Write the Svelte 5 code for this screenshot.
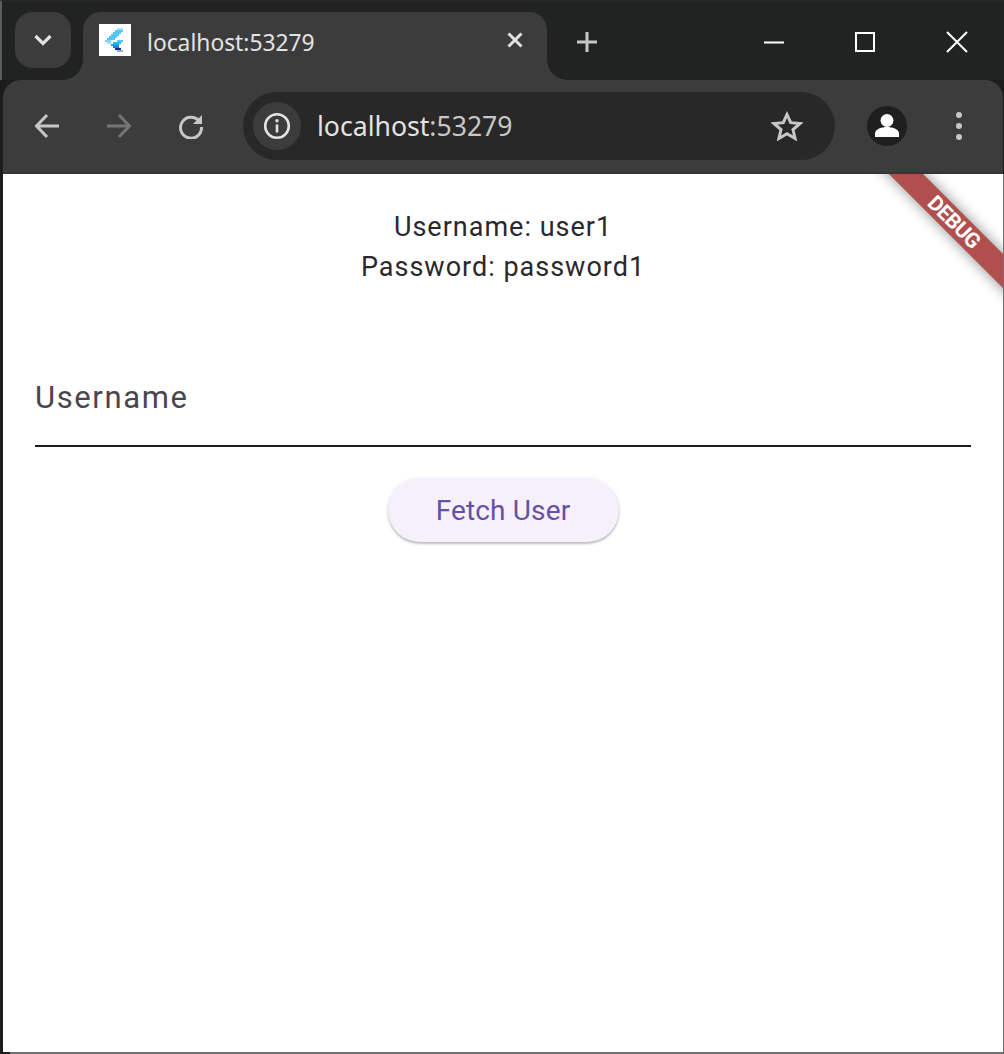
<script lang="ts">
  const title = "localhost:53279";
  const host = "localhost";
  const port = ":53279";

  // favicon is a 16x16 image shown at 2x: [row, first col, last col, colour]
  const faviconRows: [number, number, number, string][] = [
    [2, 9, 11, "#a9e2fb"],
    [3, 8, 11, "#54c5f8"],
    [4, 7, 10, "#54c5f8"],
    [5, 6, 9, "#54c5f8"],
    [6, 5, 8, "#54c5f8"],
    [7, 4, 7, "#54c5f8"],
    [8, 3, 5, "#7fd3f9"],
    [8, 9, 11, "#54c5f8"],
    [9, 4, 5, "#a9e2fb"],
    [9, 7, 10, "#29b6f6"],
    [10, 6, 9, "#12a5ee"],
    [11, 7, 9, "#0b86d6"],
    [12, 8, 10, "#01319b"],
    [13, 9, 11, "#a3a8cc"]
  ];
</script>

<div class="window">
  <div class="tabstrip">
    <button class="tab-search" aria-label="Search tabs">
      <svg width="20" height="20" viewBox="0 0 20 20"><path d="M2.500 6 10 13.500 17.500 6" fill="none" stroke="#e3e3e3" stroke-width="3.200"/></svg>
    </button>
    <div class="tab">
      <svg class="favicon" width="32" height="32" viewBox="0 0 16 16" shape-rendering="crispEdges">
        <rect width="16" height="16" fill="#fff"/>
        {#each faviconRows as [row, from, to, colour]}
          <rect x={from} y={row} width={to - from + 1} height="1" fill={colour}/>
        {/each}
      </svg>
      <span class="tab-title">{title}</span>
      <svg class="tab-close" width="16" height="16" viewBox="0 0 16 16"><path d="M1.500 1.500l13 13M14.500 1.500l-13 13" stroke="#e3e3e3" stroke-width="3"/></svg>
    </div>
    <svg class="new-tab" width="20" height="20" viewBox="0 0 20 20"><path d="M10 0v20M0 10h20" stroke="#c7c7c7" stroke-width="3"/></svg>
    <div class="caption">
      <svg width="20" height="20" viewBox="0 0 20 20"><path d="M0 10.500h20" stroke="#fff" stroke-width="2"/></svg>
      <svg width="20" height="20" viewBox="0 0 20 20"><rect x="1" y="1" width="18" height="18" fill="none" stroke="#fff" stroke-width="2"/></svg>
      <svg width="22" height="22" viewBox="0 0 22 22"><path d="M1 1l20 20M21 1 1 21" stroke="#fff" stroke-width="2"/></svg>
    </div>
  </div>

  <div class="toolbar">
    <svg class="nav" width="26" height="26" viewBox="0 0 26 26"><path d="M25 13H3M13 2 2.500 13 13 24" fill="none" stroke="#c7c7c7" stroke-width="3"/></svg>
    <svg class="nav fwd" width="26" height="26" viewBox="0 0 26 26"><path d="M1 13h22M13 2l10.500 11L13 24" fill="none" stroke="#757575" stroke-width="3"/></svg>
    <svg class="nav" width="26" height="26" viewBox="0 0 26 26"><path d="M21.500 8.500A10.500 10.500 0 1 0 23.500 14" fill="none" stroke="#c7c7c7" stroke-width="3"/><path d="M24 2v9h-9z" fill="#c7c7c7"/></svg>

    <div class="omnibox">
      <span class="info">
        <svg width="28" height="28" viewBox="0 0 28 28"><circle cx="14" cy="14" r="11.800" fill="none" stroke="#e3e3e3" stroke-width="2.600"/><path d="M14 12.500v8" stroke="#e3e3e3" stroke-width="2.600"/><circle cx="14" cy="8.800" r="1.700" fill="#e3e3e3"/></svg>
      </span>
      <span class="url"><span class="url-host">{host}</span>{port}</span>
      <svg class="star" width="32" height="30" viewBox="0 0 32 30"><path d="M16 3.500l3.700 8.200 9.300.8-7 6 2.100 9-8.100-4.700-8.100 4.700 2.100-9-7-6 9.300-.8z" fill="none" stroke="#c7c7c7" stroke-width="3"/></svg>
    </div>

    <span class="avatar">
      <svg width="40" height="40" viewBox="0 0 40 40"><circle cx="20" cy="14.500" r="6.500" fill="#fff"/><path d="M8 31v-3.500C8 23 15 21 20 21s12 2 12 6.500V31z" fill="#fff"/></svg>
    </span>
    <span class="menu"><i></i><i></i><i></i></span>
  </div>

  <main class="page">
    <div class="creds">
      <p>Username: user1</p>
      <p>Password: password1</p>
    </div>
    <div class="field">
      <span class="label">Username</span>
    </div>
    <button class="fetch">Fetch User</button>
    <div class="banner"><span>DEBUG</span></div>
  </main>
</div>

<style>
  :global(body) {
    margin: 0;
    background: #1b1c1c;
  }

  .window {
    width: 1004px;
    height: 1054px;
    display: flex;
    flex-direction: column;
    background:
      linear-gradient(90deg, #1b1c1c 10px, #707070 10px) bottom / 100% 2px no-repeat,
      linear-gradient(#707070, #707070) right 0 top 174px / 1px 100% no-repeat,
      #1b1c1c;
    overflow: hidden;
    font-family: Roboto, sans-serif;
  }

  .tabstrip {
    height: 80px;
    flex-shrink: 0;
    display: flex;
    align-items: flex-start;
    box-sizing: border-box;
    padding: 12px 0 0 13px;
    border-top: 2px solid #262828;
    border-left: 2px solid #5e5e5e;
    background: #202322;
  }

  .tab-search {
    width: 56px;
    height: 56px;
    margin-top: -2px;
    padding: 0;
    border: 0;
    border-radius: 18px;
    background: #3c3c3c;
    display: flex;
    align-items: center;
    justify-content: center;
  }

  .tab {
    position: relative;
    width: 464px;
    height: 68px;
    margin: -2px 0 0 12px;
    box-sizing: border-box;
    padding: 0 24px 12px 16px;
    background: #3c3c3c;
    border-radius: 18px 18px 0 0;
    display: flex;
    align-items: center;
    color: #e3e3e3;
  }

  /* the flares where the tab runs into the toolbar */
  .tab::before,
  .tab::after {
    content: "";
    position: absolute;
    bottom: 0;
    width: 20px;
    height: 20px;
  }

  .tab::before {
    right: 100%;
    background: radial-gradient(circle at 0 0, transparent 19.500px, #3c3c3c 20px);
  }

  .tab::after {
    left: 100%;
    background: radial-gradient(circle at 100% 0, transparent 19.500px, #3c3c3c 20px);
  }

  .favicon {
    flex-shrink: 0;
  }

  .tab-title {
    margin: 6px 0 0 16px;
    font-family: "Noto Sans", sans-serif;
    font-size: 22.800px;
    line-height: 30px;
    flex: 1;
  }

  .new-tab {
    margin: 18px 0 0 30px;
    flex-shrink: 0;
  }

  .caption {
    margin-left: auto;
    display: flex;
    align-items: center;
    gap: 71px;
    padding: 17px 36px 0 0;
  }

  .toolbar {
    height: 94px;
    flex-shrink: 0;
    margin: 0 1px 0 3px;
    box-sizing: border-box;
    padding: 14px 0 14px 31px;
    background: #3c3c3c;
    border-radius: 18px 18px 0 0;
    border-bottom: 2px solid #343434;
    display: flex;
    align-items: center;
  }

  .nav {
    flex-shrink: 0;
    margin-right: 46px;
  }

  .omnibox {
    width: 592px;
    height: 68px;
    margin-left: -7px;
    flex-shrink: 0;
    box-sizing: border-box;
    padding: 0 32px 0 10px;
    background: #282828;
    border-radius: 34px;
    display: flex;
    align-items: center;
  }

  .info {
    width: 48px;
    height: 48px;
    border-radius: 50%;
    background: #3c3c3c;
    display: flex;
    align-items: center;
    justify-content: center;
    flex-shrink: 0;
  }

  .url {
    margin-left: 16px;
    flex: 1;
    font-family: "Noto Sans", sans-serif;
    font-size: 26.600px;
    color: #c7c7c7;
  }

  .url-host {
    color: #e3e3e3;
  }

  .avatar {
    width: 40px;
    height: 40px;
    margin-left: 32px;
    border-radius: 50%;
    background: #1f1f1f;
    overflow: hidden;
    flex-shrink: 0;
  }

  .avatar svg {
    display: block;
  }

  .menu {
    margin-left: 49px;
    display: flex;
    flex-direction: column;
    gap: 5px;
  }

  .menu i {
    width: 6px;
    height: 6px;
    border-radius: 50%;
    background: #c7c7c7;
  }

  .page {
    position: relative;
    flex: 1;
    margin: 0 1px 2px 3px;
    background: #fff;
    display: flex;
    flex-direction: column;
    align-items: center;
    overflow: hidden;
    padding: 33px 32px 0;
    box-sizing: border-box;
    color: #1d1b20;
  }

  .creds {
    text-align: center;
    font-size: 27px;
    line-height: 40px;
    letter-spacing: 1px;
    color: #2a282d;
  }

  .creds p {
    margin: 0;
  }

  .field {
    width: 100%;
    height: 69px;
    margin-top: 91px;
    border-bottom: 2px solid #1d1b20;
    box-sizing: border-box;
  }

  .label {
    display: block;
    font-size: 31px;
    line-height: 40px;
    letter-spacing: 1.600px;
    color: #49454f;
  }

  .fetch {
    margin-top: 31px;
    width: 231px;
    height: 64px;
    padding: 0;
    border: 0;
    border-radius: 32px;
    background: #f5f0f9;
    color: #6750a4;
    font-family: Roboto, sans-serif;
    font-size: 28px;
    letter-spacing: 0.150px;
    box-shadow: 0 2px 2px rgba(0, 0, 0, 0.2), 0 1px 4px rgba(0, 0, 0, 0.1);
  }

  .banner {
    position: absolute;
    top: 36px;
    right: -51px;
    width: 200px;
    height: 24px;
    background: rgba(160, 40, 40, 0.82);
    transform: rotate(45deg);
    display: flex;
    align-items: center;
    justify-content: center;
    box-shadow: 0 0 14px rgba(0, 0, 0, 0.45);
  }

  .banner span {
    color: #fff;
    font-size: 21px;
    font-weight: 700;
    letter-spacing: -0.500px;
  }
</style>
